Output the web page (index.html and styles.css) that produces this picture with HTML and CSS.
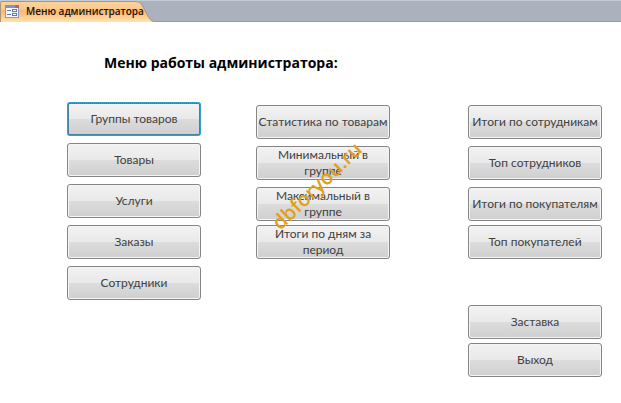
FILE: index.html
```html
<!DOCTYPE html>
<html lang="ru">
<head>
<meta charset="utf-8">
<title>Меню администратора</title>
<link rel="stylesheet" href="styles.css">
</head>
<body>
<header class="tabbar">
  <div class="tab">
    <svg class="tab-shape" viewBox="0 0 154 22" preserveAspectRatio="none" aria-hidden="true">
      <defs>
        <linearGradient id="tabfill" x1="0" y1="0" x2="0" y2="1">
          <stop offset="0" stop-color="#fbd3a0"/>
          <stop offset="0.35" stop-color="#fcc98c"/>
          <stop offset="0.5" stop-color="#fbb870"/>
          <stop offset="1" stop-color="#fee3b0"/>
        </linearGradient>
      </defs>
      <path d="M0 22V3Q0 1 2 1H136Q140 1 142 5L149 18Q151 21 154 22Z" fill="url(#tabfill)"/>
      <path d="M0.500 22V3Q0.500 1.500 2 1.500H136Q140 1.500 142 5L149 18Q151 21 154 21.500" fill="none" stroke="#a8977f"/>
    </svg>
    <svg class="tab-icon" viewBox="0 0 14 13" aria-hidden="true">
      <rect x="0.500" y="0.500" width="13" height="12" fill="#f4f6fc" stroke="#8b98c6"/>
      <rect x="0" y="0" width="14" height="3" fill="#8791c4"/>
      <rect x="10" y="0" width="4" height="3" fill="#c9605a"/>
      <path d="M2 5.500H6M2 9.500H6" stroke="#6577aa"/>
      <rect x="7.500" y="4.500" width="4" height="2" fill="#fff" stroke="#6577aa"/>
      <rect x="7.500" y="8.500" width="4" height="2" fill="#fff" stroke="#6577aa"/>
    </svg>
    <span class="tab-label">Меню администратора</span>
  </div>
</header>
<main class="form">
  <h1 class="title">Меню работы администратора:</h1>
  <div class="columns">
    <div class="column">
      <button type="button" class="btn selected">Группы товаров</button>
      <button type="button" class="btn">Товары</button>
      <button type="button" class="btn">Услуги</button>
      <button type="button" class="btn">Заказы</button>
      <button type="button" class="btn">Сотрудники</button>
    </div>
    <div class="column reports">
      <button type="button" class="btn">Статистика по товарам</button>
      <button type="button" class="btn wrap">Минимальный в<br>группе</button>
      <button type="button" class="btn wrap">Максимальный в<br>группе</button>
      <button type="button" class="btn wrap near">Итоги по дням за<br>период</button>
      <span class="watermark">dbforyou.ru</span>
    </div>
    <div class="column totals">
      <button type="button" class="btn">Итоги по сотрудникам</button>
      <button type="button" class="btn">Топ сотрудников</button>
      <button type="button" class="btn">Итоги по покупателям</button>
      <button type="button" class="btn near">Топ покупателей</button>
      <button type="button" class="btn apart">Заставка</button>
      <button type="button" class="btn near">Выход</button>
    </div>
  </div>
</main>
</body>
</html>
```

FILE: styles.css
```css
* {
  box-sizing: border-box;
}

body {
  margin: 0;
  background: #fff;
  font-family: Lato, "Open Sans", sans-serif;
}

.tabbar {
  height: 22px;
  background: #abb1bd;
  border-top: 1px solid #c3ccd5;
  border-bottom: 1px solid #959aa3;
}

.tab {
  position: relative;
  display: flex;
  align-items: center;
  gap: 7px;
  width: 154px;
  height: 22px;
  margin-top: -1px;
  padding-left: 5px;
}

.tab-shape {
  position: absolute;
  inset: 0;
  width: 100%;
  height: 100%;
}

.tab-icon {
  position: relative;
  flex: none;
  width: 14px;
  height: 13px;
}

.tab-label {
  position: relative;
  font-family: "Open Sans", sans-serif;
  font-size: 10px;
  font-weight: 600;
  line-height: 22px;
  white-space: nowrap;
  color: #1a120a;
}

.form {
  padding: 29px 19px 20px 67px;
}

.title {
  margin: 0 0 27px 37px;
  font-family: "Open Sans", sans-serif;
  font-size: 14px;
  font-weight: 700;
  line-height: 24px;
  color: #000;
}

.columns {
  display: flex;
  align-items: flex-start;
  gap: 55px;
}

.column {
  display: flex;
  flex: 1 1 0;
  flex-direction: column;
  gap: 7px;
  min-width: 0;
}

.reports,
.totals {
  position: relative;
  margin-top: 3px;
}

.totals {
  margin-left: 23px;
}

.btn {
  height: 34px;
  padding: 0;
  overflow: hidden;
  border: 1px solid #858585;
  border-radius: 3px;
  background: linear-gradient(#f2f2f2, #e9e9e9 49%, #dcdcdc 51%, #cfcfcf);
  box-shadow: inset 0 0 0 1px #f5f5f5;
  font-family: inherit;
  font-size: 12px;
  line-height: 16px;
  white-space: nowrap;
  color: #404040;
}

.selected {
  border: 2px solid #359dcb;
  box-shadow: none;
  outline: 1px dotted #606a70;
  outline-offset: -2px;
}

.wrap {
  display: flex;
  align-items: flex-start;
  justify-content: center;
}

.near {
  margin-top: -3px;
}

.apart {
  margin-top: 39px;
}

.watermark {
  position: absolute;
  top: 81px;
  left: 61px;
  font-family: "Open Sans", sans-serif;
  font-size: 20px;
  font-weight: 600;
  line-height: 24px;
  color: #dfa01c;
  pointer-events: none;
  transform: translate(-50%, -50%) rotate(-44deg);
}
```
